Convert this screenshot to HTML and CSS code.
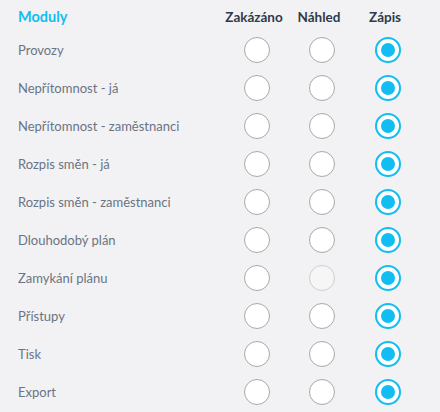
FILE: index.html
```html
<!DOCTYPE html>
<html lang="cs">
<head>
<meta charset="utf-8">
<link rel="stylesheet" href="styles.css">
</head>
<body>
<div class="table">
  <div class="row head">
    <div class="label title">Moduly</div>
    <div class="col">Zakázáno</div>
    <div class="col">Náhled</div>
    <div class="col">Zápis</div>
  </div>
  <div class="row"><div class="label">Provozy</div><div class="col"><span class="radio"></span></div><div class="col"><span class="radio"></span></div><div class="col"><span class="radio on"></span></div></div>
  <div class="row"><div class="label">Nepřítomnost - já</div><div class="col"><span class="radio"></span></div><div class="col"><span class="radio"></span></div><div class="col"><span class="radio on"></span></div></div>
  <div class="row"><div class="label">Nepřítomnost - zaměstnanci</div><div class="col"><span class="radio"></span></div><div class="col"><span class="radio"></span></div><div class="col"><span class="radio on"></span></div></div>
  <div class="row"><div class="label">Rozpis směn - já</div><div class="col"><span class="radio"></span></div><div class="col"><span class="radio"></span></div><div class="col"><span class="radio on"></span></div></div>
  <div class="row"><div class="label">Rozpis směn - zaměstnanci</div><div class="col"><span class="radio"></span></div><div class="col"><span class="radio"></span></div><div class="col"><span class="radio on"></span></div></div>
  <div class="row"><div class="label">Dlouhodobý plán</div><div class="col"><span class="radio"></span></div><div class="col"><span class="radio"></span></div><div class="col"><span class="radio on"></span></div></div>
  <div class="row"><div class="label">Zamykání plánu</div><div class="col"><span class="radio"></span></div><div class="col"><span class="radio disabled"></span></div><div class="col"><span class="radio on"></span></div></div>
  <div class="row"><div class="label">Přístupy</div><div class="col"><span class="radio"></span></div><div class="col"><span class="radio"></span></div><div class="col"><span class="radio on"></span></div></div>
  <div class="row"><div class="label">Tisk</div><div class="col"><span class="radio"></span></div><div class="col"><span class="radio"></span></div><div class="col"><span class="radio on"></span></div></div>
  <div class="row"><div class="label">Export</div><div class="col"><span class="radio"></span></div><div class="col"><span class="radio"></span></div><div class="col"><span class="radio on"></span></div></div>
</div>
</body>
</html>
```
FILE: styles.css
```css
html, body {
  margin: 0;
  padding: 0;
  background: #f2f2f5;
  font-family: "Lato", "Open Sans", sans-serif;
}
.table {
  padding: 0 19px 0 18px;
}
.row {
  display: grid;
  grid-template-columns: 1fr 64px 66px 66px;
  align-items: center;
  height: 38px;
}
.row.head {
  height: 29px;
  padding-top: 2px;
}
.label {
  font-size: 13px;
  color: #6b7482;
}
.title {
  font-size: 14.5px;
  font-weight: 700;
  color: #12bdf2;
}
.head .col {
  font-size: 13.5px;
  font-weight: 700;
  color: #2f3a4a;
  text-align: center;
  position: relative;
  left: -3px;
}
.col {
  display: flex;
  justify-content: center;
}
.radio {
  box-sizing: border-box;
  width: 26px;
  height: 26px;
  border-radius: 50%;
  border: 1px solid #a9a9a9;
  background: #fff;
  display: flex;
  align-items: center;
  justify-content: center;
}
.radio.disabled {
  background: #f6f6f6;
  border-color: #cfcfcf;
}
.radio.on {
  border: 2px solid #12bdf2;
}
.radio.on::after {
  content: "";
  width: 14px;
  height: 14px;
  border-radius: 50%;
  background: #12bdf2;
}
```
